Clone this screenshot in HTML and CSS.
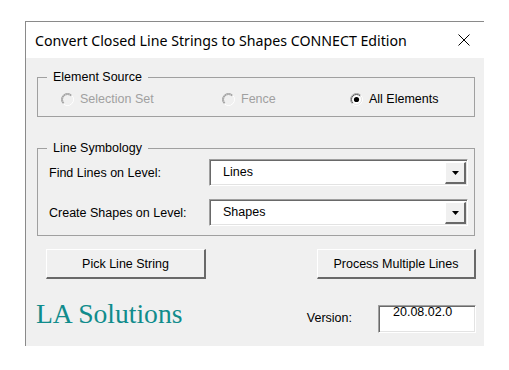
FILE: index.html
```html
<!DOCTYPE html>
<html>
<head>
<meta charset="utf-8">
<link rel="stylesheet" href="styles.css">
</head>
<body>
<svg class="defs" width="0" height="0" aria-hidden="true">
  <defs>
    <linearGradient id="ringOuter" x1="0" y1="0" x2="1" y2="1">
      <stop offset="0.45" stop-color="#a0a0a0"/>
      <stop offset="0.55" stop-color="#ffffff"/>
    </linearGradient>
    <linearGradient id="ringInner" x1="0" y1="0" x2="1" y2="1">
      <stop offset="0.45" stop-color="#555555"/>
      <stop offset="0.55" stop-color="#e3e3e3"/>
    </linearGradient>
    <linearGradient id="ringInnerOff" x1="0" y1="0" x2="1" y2="1">
      <stop offset="0.45" stop-color="#a0a0a0"/>
      <stop offset="0.55" stop-color="#f0f0f0"/>
    </linearGradient>
  </defs>
</svg>
<div class="dialog">
  <div class="titlebar">
    <span class="title">Convert Closed Line Strings to Shapes CONNECT Edition</span>
    <svg class="close" width="12" height="12" viewBox="0 0 12 12"><path d="M0.5 0.5 L11.5 11.5 M11.5 0.5 L0.5 11.5" stroke="#000" stroke-width="1" fill="none"/></svg>
  </div>
  <div class="body">
    <fieldset class="group group-source">
      <legend>Element Source</legend>
      <div class="radios">
        <label class="radio disabled">
          <svg width="13" height="13" viewBox="0 0 13 13"><circle cx="6.5" cy="6.5" r="6" fill="none" stroke="url(#ringOuter)"/><circle cx="6.5" cy="6.5" r="5" fill="#f0f0f0" stroke="url(#ringInnerOff)"/></svg>
          <span>Selection Set</span>
        </label>
        <label class="radio disabled">
          <svg width="13" height="13" viewBox="0 0 13 13"><circle cx="6.5" cy="6.5" r="6" fill="none" stroke="url(#ringOuter)"/><circle cx="6.5" cy="6.5" r="5" fill="#f0f0f0" stroke="url(#ringInnerOff)"/></svg>
          <span>Fence</span>
        </label>
        <label class="radio">
          <svg width="13" height="13" viewBox="0 0 13 13"><circle cx="6.5" cy="6.5" r="6" fill="none" stroke="url(#ringOuter)"/><circle cx="6.5" cy="6.5" r="5" fill="#fff" stroke="url(#ringInner)"/><circle cx="6.5" cy="6.5" r="2.6" fill="#000"/></svg>
          <span>All Elements</span>
        </label>
      </div>
    </fieldset>
    <fieldset class="group group-symbology">
      <legend>Line Symbology</legend>
      <div class="fields">
        <span class="label">Find Lines on Level:</span>
        <div class="combo"><span class="combo-text">Lines</span><span class="combo-btn"><svg width="7" height="4" viewBox="0 0 7 4"><polygon points="0,0 7,0 3.5,4" fill="#000"/></svg></span></div>
        <span class="label">Create Shapes on Level:</span>
        <div class="combo"><span class="combo-text">Shapes</span><span class="combo-btn"><svg width="7" height="4" viewBox="0 0 7 4"><polygon points="0,0 7,0 3.5,4" fill="#000"/></svg></span></div>
      </div>
    </fieldset>
    <div class="buttons">
      <button class="btn btn-pick">Pick Line String</button>
      <button class="btn btn-process">Process Multiple Lines</button>
    </div>
    <div class="footer">
      <span class="brand">LA Solutions</span>
      <span class="version-label">Version:</span>
      <div class="version-box">20.08.02.0</div>
    </div>
  </div>
</div>
</body>
</html>
```
FILE: styles.css
```css
html, body {
  margin: 0;
  padding: 0;
  background: #ffffff;
}
.defs {
  position: absolute;
  width: 0;
  height: 0;
}
.dialog {
  margin: 21px 0 0 25px;
  width: 459px;
  height: 325px;
  box-sizing: border-box;
  border-left: 1px solid #8a8a8a;
  border-top: 1px solid #8a8a8a;
  display: flex;
  flex-direction: column;
  font-family: "Liberation Sans", Arial, sans-serif;
  font-size: 12.5px;
  color: #000;
}
.titlebar {
  height: 36px;
  background: #ffffff;
  display: flex;
  align-items: center;
  justify-content: space-between;
  padding: 0 14px 0 9px;
  flex: none;
}
.title {
  font-family: "Noto Sans", sans-serif;
  font-size: 14.2px;
  color: #000;
}
.close {
  display: block;
}
.body {
  flex: 1;
  background: #f0f0f0;
  display: flex;
  flex-direction: column;
}
.group {
  margin: 12px 9px 0 11px;
  padding: 0 6px 0 9px;
  border: 1px solid #a0a0a0;
  min-width: 0;
}
.group legend {
  padding: 0 6px;
  line-height: 14px;
}
.group-symbology {
  margin-top: 24px;
}
.radios {
  height: 30px;
  padding-bottom: 2px;
  display: grid;
  grid-template-columns: 161px 128px auto;
  align-items: center;
  padding-left: 14px;
}
.radio {
  display: flex;
  align-items: center;
  gap: 6px;
  color: #000;
}
.radio svg {
  display: block;
  flex: none;
}
.radio.disabled {
  color: #a0a0a0;
}
.fields {
  display: grid;
  grid-template-columns: 162px 1fr;
  grid-auto-rows: 27px;
  row-gap: 13px;
  margin-top: 4px;
  padding-bottom: 9px;
  align-items: center;
}
.label {
  padding-left: 2px;
}
.combo {
  height: 27px;
  box-sizing: border-box;
  background: #fff;
  border: 1px solid;
  border-color: #a0a0a0 #ffffff #ffffff #a0a0a0;
  box-shadow: inset 1px 1px 0 #696969, inset -1px -1px 0 #e3e3e3;
  display: flex;
  align-items: flex-start;
  justify-content: space-between;
  padding: 2px 1px 1px 13px;
}
.combo-text {
  padding-top: 3px;
  line-height: 14px;
}
.combo-btn {
  width: 21px;
  height: 22px;
  box-sizing: border-box;
  background: #f0f0f0;
  border-top: 1px solid #ffffff;
  border-left: 1px solid #ffffff;
  border-right: 2px solid #696969;
  border-bottom: 2px solid #696969;
  display: flex;
  align-items: center;
  justify-content: center;
  padding-top: 1px;
}
.combo-btn svg {
  display: block;
}
.buttons {
  display: flex;
  justify-content: space-between;
  margin: 13px 8px 0 20px;
}
.btn {
  height: 30px;
  box-sizing: border-box;
  background: #f0f0f0;
  border: none;
  border-top: 1px solid #ffffff;
  border-left: 1px solid #ffffff;
  border-right: 2px solid #696969;
  border-bottom: 2px solid #696969;
  font-family: "Liberation Sans", Arial, sans-serif;
  font-size: 12.5px;
  color: #000;
  padding: 0;
}
.btn-pick {
  width: 160px;
}
.btn-process {
  width: 159px;
}
.footer {
  display: flex;
  align-items: flex-start;
  margin: 26px 8px 0 10px;
}
.brand {
  font-family: "Liberation Serif", "Times New Roman", serif;
  font-size: 27.6px;
  line-height: 28px;
  color: #108c8c;
  flex: 1;
  margin-top: -5px;
}
.version-label {
  margin-top: 6px;
  margin-right: 26px;
  line-height: 14px;
}
.version-box {
  width: 98px;
  height: 28px;
  box-sizing: border-box;
  background: #fff;
  border: 1px solid;
  border-color: #a0a0a0 #ffffff #ffffff #a0a0a0;
  box-shadow: inset 1px 1px 0 #696969, inset -1px -1px 0 #e3e3e3;
  padding: 1px 0 0 14px;
  line-height: 10px;
}
```
